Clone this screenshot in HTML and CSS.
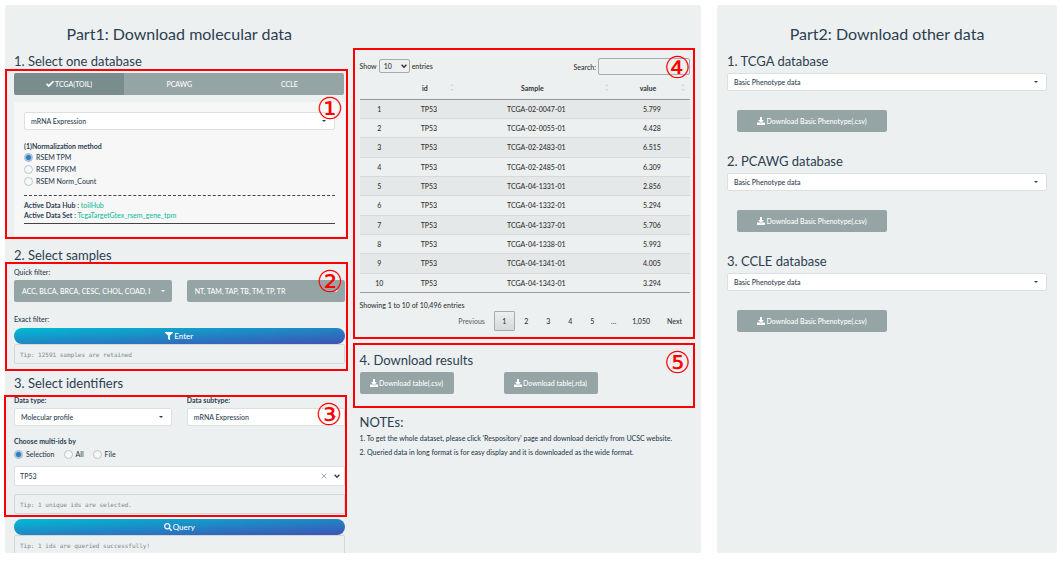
FILE: index.html
```
<!DOCTYPE html>
<html lang="en">
<head>
<meta charset="utf-8">
<title>Download data</title>
<link rel="stylesheet" href="styles.css">
</head>
<body>
<svg class="sprite" aria-hidden="true">
  <symbol id="i-check" viewBox="0 0 512 512"><path d="M173.900 460 0 285 70 205 180 310 440 50 512 125z"/></symbol>
  <symbol id="i-filter" viewBox="0 0 512 512"><path d="M488 0H24C2.700 0-8 25.900 7 41l185 185v206c0 8 4 15 10 20l80 56c16 11 38 0 38-20V226L505 41c15-15 4-41-17-41z"/></symbol>
  <symbol id="i-search" viewBox="0 0 512 512"><path d="M505 442.700 405.300 343c-4.500-4.500-10.600-7-17-7H372c27.600-35.300 44-79.700 44-128C416 93.100 322.900 0 208 0S0 93.100 0 208s93.100 208 208 208c48.300 0 92.700-16.400 128-44v16.300c0 6.400 2.500 12.500 7 17l99.700 99.700c9.400 9.400 24.600 9.400 33.900 0l28.300-28.300c9.400-9.400 9.400-24.600.1-34zM208 336c-70.700 0-128-57.200-128-128 0-70.700 57.200-128 128-128 70.700 0 128 57.200 128 128 0 70.700-57.200 128-128 128z"/></symbol>
  <symbol id="i-download" viewBox="0 0 512 512"><path d="M216 0h80c13 0 24 11 24 24v168h88c18 0 27 21 14 34L270 378c-7 7-20 7-27 0L91 226c-13-13-4-34 13-34h88V24c0-13 11-24 24-24zm296 376v112c0 13-11 24-24 24H24c-13 0-24-11-24-24V376c0-13 11-24 24-24h147l49 49c20 20 52 20 72 0l49-49h147c13 0 24 11 24 24z"/></symbol>
  <symbol id="i-chevron" viewBox="0 0 10 10"><path d="M1 3l4 4 4-4" fill="none" stroke="currentColor" stroke-width="2.400"/></symbol>
</svg>
<main class="page">
  <section class="panel panel-main">
    <div class="column">
      <h3 class="title">Part1: Download molecular data</h3>
      <h4 class="heading">1. Select one database</h4>
      <div class="marked">
        <div class="tabs">
          <button class="tab tab-active" type="button"><svg class="icon"><use href="#i-check"/></svg>TCGA(TOIL)</button>
          <button class="tab" type="button">PCAWG</button>
          <button class="tab" type="button">CCLE</button>
        </div>
        <div class="well">
          <div class="picker"><select class="field" aria-label="Data type"><option>mRNA Expression</option></select></div>
          <fieldset class="group method">
            <legend class="label">(1)Normalization method</legend>
            <label class="radio"><input type="radio" name="norm" checked>RSEM TPM</label>
            <label class="radio"><input type="radio" name="norm">RSEM FPKM</label>
            <label class="radio"><input type="radio" name="norm">RSEM Norm_Count</label>
          </fieldset>
          <hr class="rule rule-dashed">
          <p class="active"><b>Active Data Hub</b> : <a href="#hub">toilHub</a></p>
          <p class="active"><b>Active Data Set</b> : <a href="#set">TcgaTargetGtex_rsem_gene_tpm</a></p>
          <hr class="rule">
        </div>
        <div class="frame frame-1"><span class="badge">①</span></div>
      </div>

      <h4 class="heading">2. Select samples</h4>
      <div class="marked">
        <div class="label-plain">Quick filter:</div>
        <div class="pair">
          <button class="drop" type="button"><span class="drop-text">ACC, BLCA, BRCA, CESC, CHOL, COAD, I</span></button>
          <button class="drop" type="button"><span class="drop-text">NT, TAM, TAP, TB, TM, TP, TR</span></button>
        </div>
        <div class="label-plain label-exact">Exact filter:</div>
        <button class="action" type="button"><svg class="icon"><use href="#i-filter"/></svg>Enter</button>
        <pre class="tip">Tip: 12591 samples are retained</pre>
        <div class="frame frame-2"><span class="badge">②</span></div>
      </div>

      <h4 class="heading">3. Select identifiers</h4>
      <div class="marked">
        <div class="pair">
          <div>
            <label class="label" for="dtype">Data type:</label>
            <div class="picker"><select class="field" id="dtype"><option>Molecular profile</option></select></div>
          </div>
          <div>
            <label class="label" for="dsub">Data subtype:</label>
            <div class="picker"><select class="field" id="dsub"><option>mRNA Expression</option></select></div>
          </div>
        </div>
        <fieldset class="group ids">
          <legend class="label">Choose multi-ids by</legend>
          <div class="radio-row">
            <label class="radio"><input type="radio" name="ids" checked>Selection</label>
            <label class="radio"><input type="radio" name="ids">All</label>
            <label class="radio"><input type="radio" name="ids">File</label>
          </div>
        </fieldset>
        <div class="combo">
          <input class="combo-input" type="text" value="TP53" aria-label="Identifier">
          <button class="combo-clear" type="button" aria-label="Clear"><svg viewBox="0 0 10 10"><path d="M1 1l8 8M9 1l-8 8"/></svg></button>
          <svg class="combo-arrow"><use href="#i-chevron"/></svg>
        </div>
        <pre class="tip">Tip: 1 unique ids are selected.</pre>
        <div class="frame frame-3"><span class="badge">③</span></div>
      </div>
      <button class="action action-query" type="button"><svg class="icon"><use href="#i-search"/></svg>Query</button>
      <pre class="tip tip-cut">Tip: 1 ids are queried successfully!</pre>
    </div>

    <div class="column column-results">
      <div class="marked">
        <div class="controls">
          <label class="length">Show <span class="length-box"><select class="length-select"><option>10</option></select><svg><use href="#i-chevron"/></svg></span> entries</label>
          <label class="search">Search:<input class="search-input" type="search"></label>
        </div>
        <table class="data">
          <colgroup><col class="c-num"><col class="c-id"><col class="c-sample"><col class="c-value"></colgroup>
          <thead><tr><th></th><th class="sort">id</th><th class="sort">Sample</th><th class="sort">value</th></tr></thead>
          <tbody>
            <tr><td>1</td><td>TP53</td><td>TCGA-02-0047-01</td><td>5.799</td></tr>
            <tr><td>2</td><td>TP53</td><td>TCGA-02-0055-01</td><td>4.428</td></tr>
            <tr><td>3</td><td>TP53</td><td>TCGA-02-2483-01</td><td>6.515</td></tr>
            <tr><td>4</td><td>TP53</td><td>TCGA-02-2485-01</td><td>6.309</td></tr>
            <tr><td>5</td><td>TP53</td><td>TCGA-04-1331-01</td><td>2.856</td></tr>
            <tr><td>6</td><td>TP53</td><td>TCGA-04-1332-01</td><td>5.294</td></tr>
            <tr><td>7</td><td>TP53</td><td>TCGA-04-1337-01</td><td>5.706</td></tr>
            <tr><td>8</td><td>TP53</td><td>TCGA-04-1338-01</td><td>5.993</td></tr>
            <tr><td>9</td><td>TP53</td><td>TCGA-04-1341-01</td><td>4.005</td></tr>
            <tr><td>10</td><td>TP53</td><td>TCGA-04-1343-01</td><td>3.294</td></tr>
          </tbody>
        </table>
        <div class="info">Showing 1 to 10 of 10,496 entries</div>
        <nav class="pages" aria-label="Table pages">
          <button class="page-btn page-off" type="button">Previous</button>
          <button class="page-btn page-current" type="button">1</button>
          <button class="page-btn" type="button">2</button>
          <button class="page-btn" type="button">3</button>
          <button class="page-btn" type="button">4</button>
          <button class="page-btn" type="button">5</button>
          <span class="page-gap">…</span>
          <button class="page-btn" type="button">1,050</button>
          <button class="page-btn" type="button">Next</button>
        </nav>
        <div class="frame frame-4"><span class="badge">④</span></div>
      </div>
      <div class="marked results">
        <h4 class="heading">4. Download results</h4>
        <div class="downloads">
          <button class="download" type="button"><svg class="icon"><use href="#i-download"/></svg>Download table(.csv)</button>
          <button class="download" type="button"><svg class="icon"><use href="#i-download"/></svg>Download table(.rda)</button>
        </div>
        <div class="frame frame-5"><span class="badge">⑤</span></div>
      </div>
      <div class="notes">
        <h4 class="heading">NOTEs:</h4>
        <p>1. To get the whole dataset, please click 'Respository' page and download derictly from UCSC website.</p>
        <p>2. Queried data in long format is for easy display and it is downloaded as the wide format.</p>
      </div>
    </div>
  </section>

  <section class="panel panel-other">
    <h3 class="title">Part2: Download other data</h3>
    <div class="other">
      <h4 class="heading">1. TCGA database</h4>
      <div class="picker"><select class="field" aria-label="TCGA data"><option>Basic Phenotype data</option></select></div>
      <button class="download download-wide" type="button"><svg class="icon"><use href="#i-download"/></svg>Download Basic Phenotype(.csv)</button>
    </div>
    <div class="other">
      <h4 class="heading">2. PCAWG database</h4>
      <div class="picker"><select class="field" aria-label="PCAWG data"><option>Basic Phenotype data</option></select></div>
      <button class="download download-wide" type="button"><svg class="icon"><use href="#i-download"/></svg>Download Basic Phenotype(.csv)</button>
    </div>
    <div class="other">
      <h4 class="heading">3. CCLE database</h4>
      <div class="picker"><select class="field" aria-label="CCLE data"><option>Basic Phenotype data</option></select></div>
      <button class="download download-wide" type="button"><svg class="icon"><use href="#i-download"/></svg>Download Basic Phenotype(.csv)</button>
    </div>
  </section>
</main>
</body>
</html>
```
FILE: styles.css
```
* { box-sizing: border-box; }
body {
  margin: 0;
  background: #fff;
  color: #2c3e50;
  font: 500 7px/10px Lato, "Liberation Sans", sans-serif;
}
button, input, select { font: inherit; color: inherit; margin: 0; }
button { border: 0; cursor: pointer; }
h3, h4, p, pre { margin: 0; }
.sprite { position: absolute; width: 0; height: 0; }
.icon { width: 8px; height: 8px; fill: currentColor; flex: none; }

.page {
  display: grid;
  grid-template-columns: 696fr 340fr;
  gap: 16px;
  min-height: 100vh;
  padding: 5px 6px 11px 5px;
}
.panel { background: #ecf0f1; border-radius: 2px; }
.panel-main {
  display: grid;
  grid-template-columns: minmax(0, 1fr) minmax(0, 1fr);
  gap: 15px;
  padding: 0 11px 0 9px;
}
.panel-other { padding: 0 10px; }
.column-results { padding-top: 53px; }

.title {
  padding-top: 19px;
  margin-bottom: 8px;
  font-size: 16px;
  line-height: 20px;
  font-weight: 400;
  text-align: center;
}
.heading {
  margin-bottom: 3px;
  font-size: 13px;
  line-height: 18px;
  font-weight: 400;
}
.marked { position: relative; margin-bottom: 10px; }

.tabs { display: grid; grid-template-columns: repeat(3, 1fr); margin-bottom: 7px; }
.tab {
  display: flex;
  align-items: center;
  justify-content: center;
  gap: 1px;
  height: 22px;
  background: #95a5a6;
  color: #fff;
}
.tab:first-child { border-radius: 2px 0 0 2px; }
.tab:last-of-type { border-radius: 0 2px 2px 0; }
.tab-active { background: #798d8f; }

.well { padding: 10px 10px 12px; background: #f7f7f7; }
.picker { position: relative; }
.picker::after {
  content: "";
  position: absolute;
  right: 9px;
  top: 8px;
  border: 2px solid transparent;
  border-top-color: #2c3e50;
  border-bottom: 0;
}
.field {
  appearance: none;
  display: block;
  width: 100%;
  height: 18px;
  padding: 0 16px 0 6px;
  border: 1px solid #dce0e2;
  border-radius: 2px;
  background: #fff;
}
.group { margin: 0; padding: 0; border: 0; min-width: 0; }
.method { margin-top: 11px; }
.label { display: block; padding: 0; font-weight: 700; }
.radio { display: flex; align-items: center; gap: 3px; height: 12px; }
.radio input {
  appearance: none;
  width: 9px;
  height: 9px;
  border: 1px solid #bcc3c6;
  border-radius: 50%;
  background: #f7f9f9;
}
.radio input:checked {
  border-color: #9fb6cc;
  background: radial-gradient(circle, #337ac0 2px, #fff 4px);
}
.rule { margin: 3px 0 0; border: 0; border-top: 1px solid #444; }
.rule-dashed { margin: 8px 0 4px; border-top-style: dashed; }
.active a { color: #18bc9c; text-decoration: none; }

.pair { display: grid; grid-template-columns: minmax(0, 1fr) minmax(0, 1fr); gap: 15px; }
.pair .label { margin-bottom: 3px; }
.label-plain { margin-bottom: 3px; }
.label-exact { margin: 12px 0 4px; }
.drop {
  position: relative;
  height: 22px;
  padding: 0 12px 0 8px;
  border-radius: 2px;
  background: #95a5a6;
  color: #fff;
  text-align: left;
}
.drop::after {
  content: "";
  position: absolute;
  right: 7px;
  top: 10px;
  border: 2px solid transparent;
  border-top-color: #fff;
  border-bottom: 0;
}
.drop-text { display: block; white-space: nowrap; }
.action {
  display: flex;
  align-items: center;
  justify-content: center;
  gap: 1px;
  width: 100%;
  height: 16px;
  border-radius: 8px;
  background: linear-gradient(to bottom right, #00bcd4, #3f51b5);
  color: #fff;
  font-size: 8px;
}
.action-query { margin-top: -5px; }
.tip {
  height: 20px;
  padding: 5px;
  border: 1px solid #d3d9db;
  border-radius: 2px;
  color: #7b8a8b;
  font: 6px/10px "DejaVu Sans Mono", monospace;
}
.tip-cut { height: 18px; border-bottom: 0; border-radius: 2px 2px 0 0; }

.ids { margin-top: 10px; }
.ids .label { margin-bottom: 2px; }
.radio-row { display: flex; gap: 9px; }
.combo {
  display: flex;
  align-items: center;
  height: 20px;
  margin: 6px 0 8px;
  padding: 0 4px 0 5px;
  border: 1px solid #dce0e2;
  border-radius: 2px;
  background: #fff;
}
.combo-input { flex: 1; min-width: 0; padding: 0; border: 0; background: none; }
.combo-clear { display: flex; width: 6px; height: 6px; margin-right: 7px; padding: 0; background: none; }
.combo-clear svg { width: 100%; height: 100%; stroke: #8c9698; stroke-width: 1.400; }
.combo-arrow { width: 6px; height: 6px; }

.controls { display: flex; justify-content: space-between; align-items: flex-start; margin-bottom: 3px; color: #333; }
.length { display: flex; align-items: center; gap: 2px; height: 15px; }
.length-box { position: relative; display: flex; }
.length-select {
  appearance: none;
  width: 31px;
  height: 14px;
  padding: 0 0 0 4px;
  border: 1px solid #aaa;
  border-radius: 2px;
  background: transparent;
}
.length-box svg { position: absolute; right: 3px; top: 4px; width: 6px; height: 6px; }
.search { display: flex; align-items: center; gap: 2px; }
.search-input { width: 92px; height: 17px; border: 1px solid #aaa; border-radius: 2px; background: transparent; }

.data {
  width: 100%;
  height: 215px;
  table-layout: fixed;
  border-collapse: collapse;
  border-bottom: 1px solid #999;
  color: #333;
  text-align: center;
}
.c-num { width: 12%; }
.c-id { width: 18%; }
.c-sample { width: 47%; }
.data th { height: 21px; padding: 0; border-bottom: 1px solid #999; }
.data td { padding: 0; border-top: 1px solid #d5d9da; }
.data tbody tr:nth-child(odd) { background: #e4e8e9; }
.data .sort { position: relative; padding-right: 8px; }
.sort::before, .sort::after {
  content: "";
  position: absolute;
  right: 5px;
  border: 2px solid transparent;
}
.sort::before { top: 6px; border-bottom-color: #d5d9db; border-top: 0; }
.sort::after { top: 11px; border-top-color: #d5d9db; border-bottom: 0; }

.info { margin-top: 7px; color: #333; }
.pages { display: flex; justify-content: flex-end; gap: 1px; margin-top: 1px; color: #333; }
.page-btn { min-width: 21px; height: 20px; padding: 0 7px; border: 1px solid transparent; background: none; }
.page-current { border-color: #aaa; border-radius: 1px; background: linear-gradient(#ecf0f1, #d5d9da); }
.page-off { color: #666; }
.page-gap { padding: 5px 7px; }

.results { margin-top: 20px; margin-bottom: 19px; }
.downloads { display: grid; grid-template-columns: 94px 94px; gap: 50px; }
.download {
  display: flex;
  align-items: center;
  justify-content: center;
  gap: 1px;
  height: 22px;
  padding: 0;
  border-radius: 2px;
  background: #95a5a6;
  color: #fff;
  white-space: nowrap;
}
.notes .heading { margin: 0; }
.notes p { line-height: 14px; white-space: nowrap; }
.other { margin-bottom: 20px; }
.download-wide { width: 150px; margin: 19px 0 0 10px; }

.frame { position: absolute; border: 2px solid #f00; pointer-events: none; }
.frame-1 { inset: -4px -3px -3px -9px; }
.frame-2 { inset: -5px -3px -7px -9px; }
.frame-3 { inset: 0 -2px -3px -10px; }
.frame-4 { inset: -10px -5px -8px -7px; }
.frame-5 { inset: -8px -5px -14px -7px; }
.badge {
  position: absolute;
  right: 2px;
  top: 5px;
  color: #f00;
  font: 400 30px/26px "DejaVu Sans", sans-serif;
}
.frame-1 .badge { top: 25px; }
```
